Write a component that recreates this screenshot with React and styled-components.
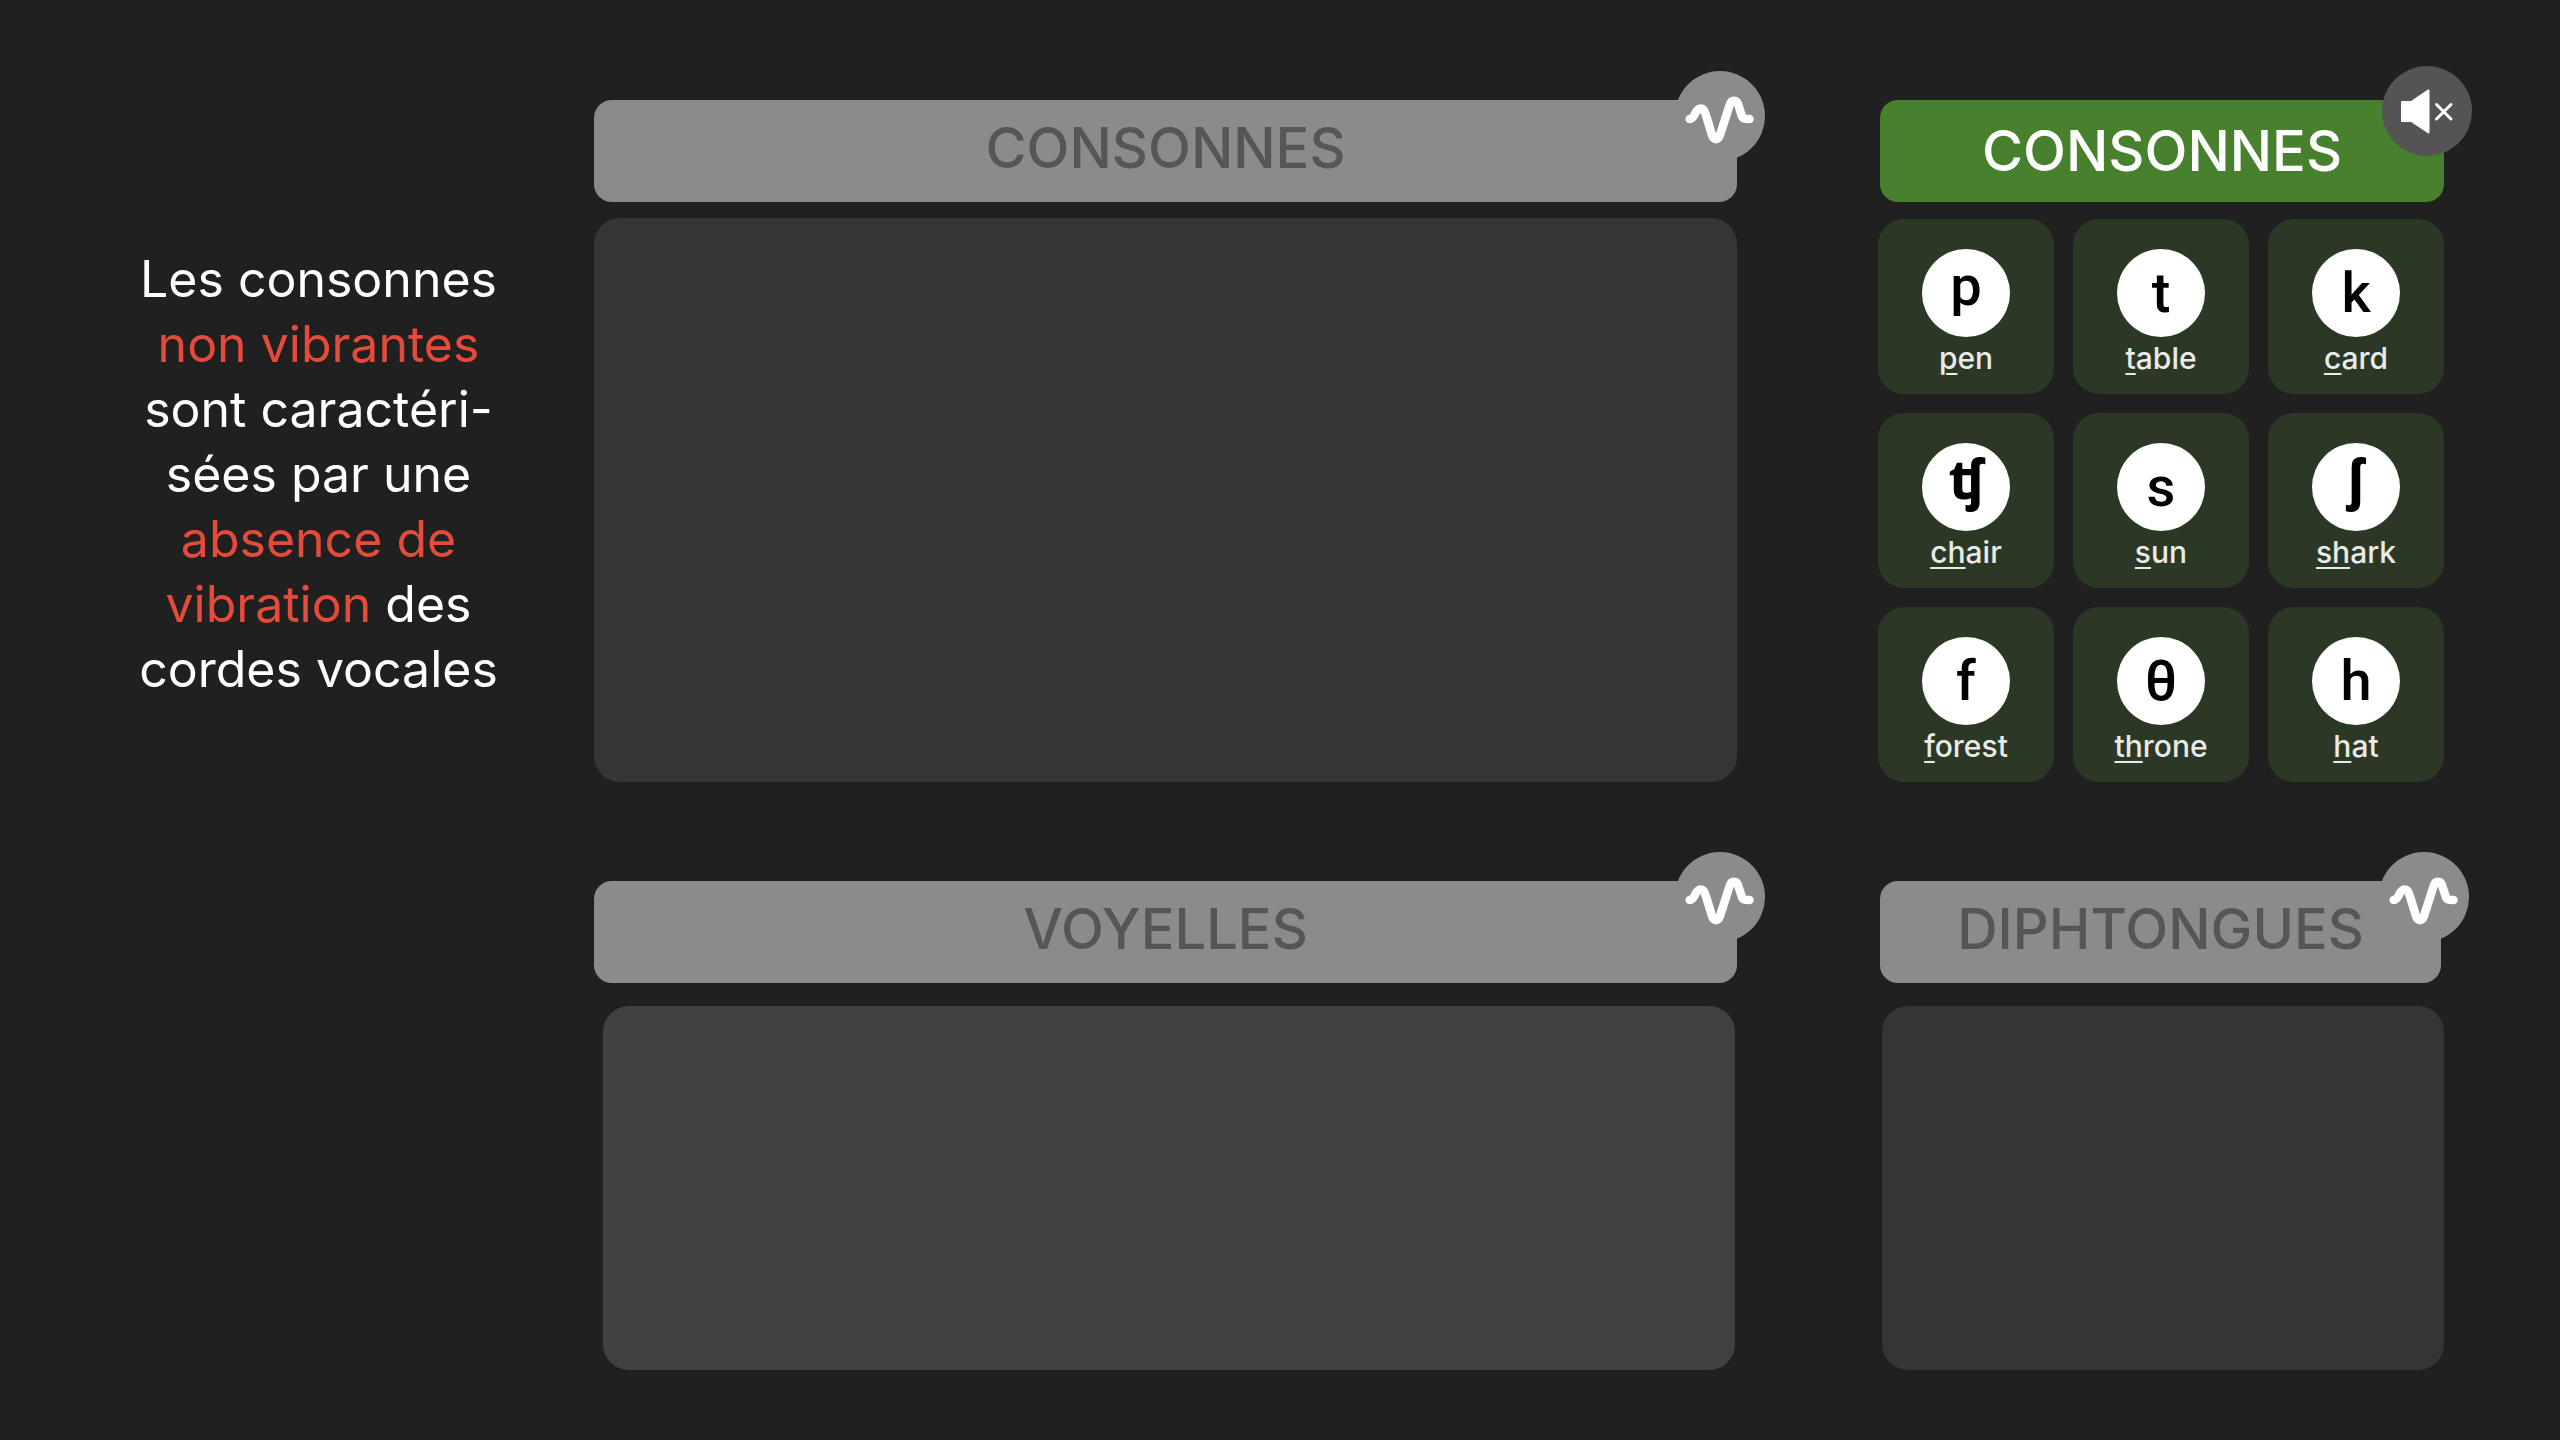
import React from "react";
import styled, { createGlobalStyle } from "styled-components";

const GlobalStyle = createGlobalStyle`
  *, *::before, *::after { box-sizing: border-box; }
  body {
    margin: 0;
    background: #202020;
    font-family: Inter, "Open Sans", "Liberation Sans", sans-serif;
  }
`;

const Page = styled.main`
  display: grid;
  grid-template-columns: minmax(0, 551fr) minmax(0, 1143fr) minmax(0, 707fr);
  grid-template-rows: auto 1fr;
  row-gap: 99px;
  min-height: 100vh;
  padding: 100px 116px 70px 43px;
`;

const Intro = styled.p`
  grid-row: 1 / -1;
  margin: 0;
  padding-top: 147px;
  color: #ffffff;
  font-size: 50px;
  line-height: 65px;
  text-align: center;
`;

const Highlight = styled.em`
  color: #e44b3b;
  font-style: normal;
`;

const Section = styled.section`
  display: flex;
  flex-direction: column;
  gap: ${({ $gap }) => $gap}px;
  padding-left: ${({ $apart }) => ($apart ? 141 : 0)}px;
`;

const Header = styled.header`
  position: relative;
  display: flex;
  justify-content: center;
  height: 102px;
  margin: ${({ $inset }) => $inset || "0"};
  padding-top: ${({ $active }) => ($active ? 17 : 14)}px;
  border-radius: 18px;
  background: ${({ $active }) => ($active ? "#47812d" : "#8a8c8a")};
  color: ${({ $active }) => ($active ? "#ffffff" : "#565656")};
`;

const Title = styled.h2`
  margin: 0;
  font-size: 56px;
  line-height: 68px;
  font-weight: 500;
`;

const Badge = styled.button`
  position: absolute;
  top: ${({ $muted }) => ($muted ? -34 : -29)}px;
  right: -28px;
  width: 90px;
  height: 90px;
  padding: 0;
  border: 0;
  border-radius: 50%;
  background: ${({ $muted }) => ($muted ? "#545454" : "#8a8c8a")};
  cursor: pointer;

  svg { display: block; }
`;

const Body = styled.div`
  flex: 1;
  min-height: 240px;
  margin: ${({ $inset }) => $inset || "0"};
  border-radius: 26px;
  background: ${({ $light }) => ($light ? "#404241" : "#343635")};
`;

const Tiles = styled.div`
  display: grid;
  grid-template-columns: repeat(3, 1fr);
  gap: 19px;
`;

const Tile = styled.button`
  display: flex;
  flex-direction: column;
  align-items: center;
  height: 175px;
  padding: 30px 0 0;
  border: 0;
  border-radius: 26px;
  background: #2b3826;
  color: #e8ebe7;
  font-family: inherit;
  cursor: pointer;
`;

const Symbol = styled.span`
  display: flex;
  align-items: center;
  justify-content: center;
  width: 88px;
  height: 88px;
  padding-bottom: ${({ $raised }) => ($raised ? 14 : 0)}px;
  border-radius: 50%;
  background: #ffffff;
  color: #000000;
  font-family: Roboto, "Noto Sans", sans-serif;
  font-size: 56px;
  font-weight: ${({ $heavy }) => ($heavy ? 700 : 500)};
  line-height: 56px;
`;

const Word = styled.span`
  margin-top: 3px;
  font-size: 30px;
  font-weight: 500;
  line-height: 36px;

  u {
    text-decoration-thickness: 2px;
    text-underline-offset: 4px;
  }
`;

function Wave() {
  return (
    <svg width="90" height="90" viewBox="0 0 90 90" fill="none" aria-hidden="true">
      <path
        d="M14.7 48C20 48 20 37.5 25.5 37.5C29 37.5 30 41 31.5 46L37 64C38.5 69.5 43.5 69.5 45 64L54.5 34.5C56 28 62 28 63.5 34.5L66.5 44C67.5 47.5 69 48 74.5 48"
        stroke="#ffffff"
        strokeWidth="8.5"
        strokeLinecap="round"
        strokeLinejoin="round"
      />
    </svg>
  );
}

function Muted() {
  return (
    <svg width="90" height="90" viewBox="0 0 90 90" aria-hidden="true">
      <path
        d="M20 35H29L46 23.5Q47.5 23 47.5 25V66Q47.5 68 46 67.3L29 56H20Q19 56 19 55V36Q19 35 20 35Z"
        fill="#ffffff"
      />
      <path d="M54.5 38.5L69 53M69 38.5L54.5 53" stroke="#ffffff" strokeWidth="3" strokeLinecap="round" />
    </svg>
  );
}

function PanelHeader({ title, muted, inset }) {
  return (
    <Header $active={muted} $inset={inset}>
      <Title>{title}</Title>
      <Badge type="button" $muted={muted} aria-label={title}>
        {muted ? <Muted /> : <Wave />}
      </Badge>
    </Header>
  );
}

const sounds = [
  { symbol: "p", mark: "p", rest: "en", raised: true },
  { symbol: "t", mark: "t", rest: "able" },
  { symbol: "k", mark: "c", rest: "ard" },
  { symbol: "ʧ", mark: "ch", rest: "air", raised: true, heavy: true },
  { symbol: "s", mark: "s", rest: "un" },
  { symbol: "ʃ", mark: "sh", rest: "ark", raised: true, heavy: true },
  { symbol: "f", mark: "f", rest: "orest" },
  { symbol: "θ", mark: "th", rest: "rone" },
  { symbol: "h", mark: "h", rest: "at" },
];

export default function App() {
  return (
    <>
      <GlobalStyle />
      <Page>
        <Intro>
          Les consonnes
          <br />
          <Highlight>non vibrantes</Highlight>
          <br />
          sont caractéri-
          <br />
          sées par une
          <br />
          <Highlight>absence de</Highlight>
          <br />
          <Highlight>vibration</Highlight> des
          <br />
          cordes vocales
        </Intro>

        <Section $gap={16}>
          <PanelHeader title="CONSONNES" />
          <Body />
        </Section>

        <Section $gap={17} $apart>
          <PanelHeader title="CONSONNES" muted inset="0 0 0 2px" />
          <Tiles>
            {sounds.map((s) => (
              <Tile type="button" key={s.symbol}>
                <Symbol $raised={s.raised} $heavy={s.heavy}>
                  {s.symbol}
                </Symbol>
                <Word>
                  <u>{s.mark}</u>
                  {s.rest}
                </Word>
              </Tile>
            ))}
          </Tiles>
        </Section>

        <Section $gap={23}>
          <PanelHeader title="VOYELLES" />
          <Body $light $inset="0 2px 0 9px" />
        </Section>

        <Section $gap={23} $apart>
          <PanelHeader title="DIPHTONGUES" inset="0 3px 0 2px" />
          <Body $inset="0 0 0 4px" />
        </Section>
      </Page>
    </>
  );
}
